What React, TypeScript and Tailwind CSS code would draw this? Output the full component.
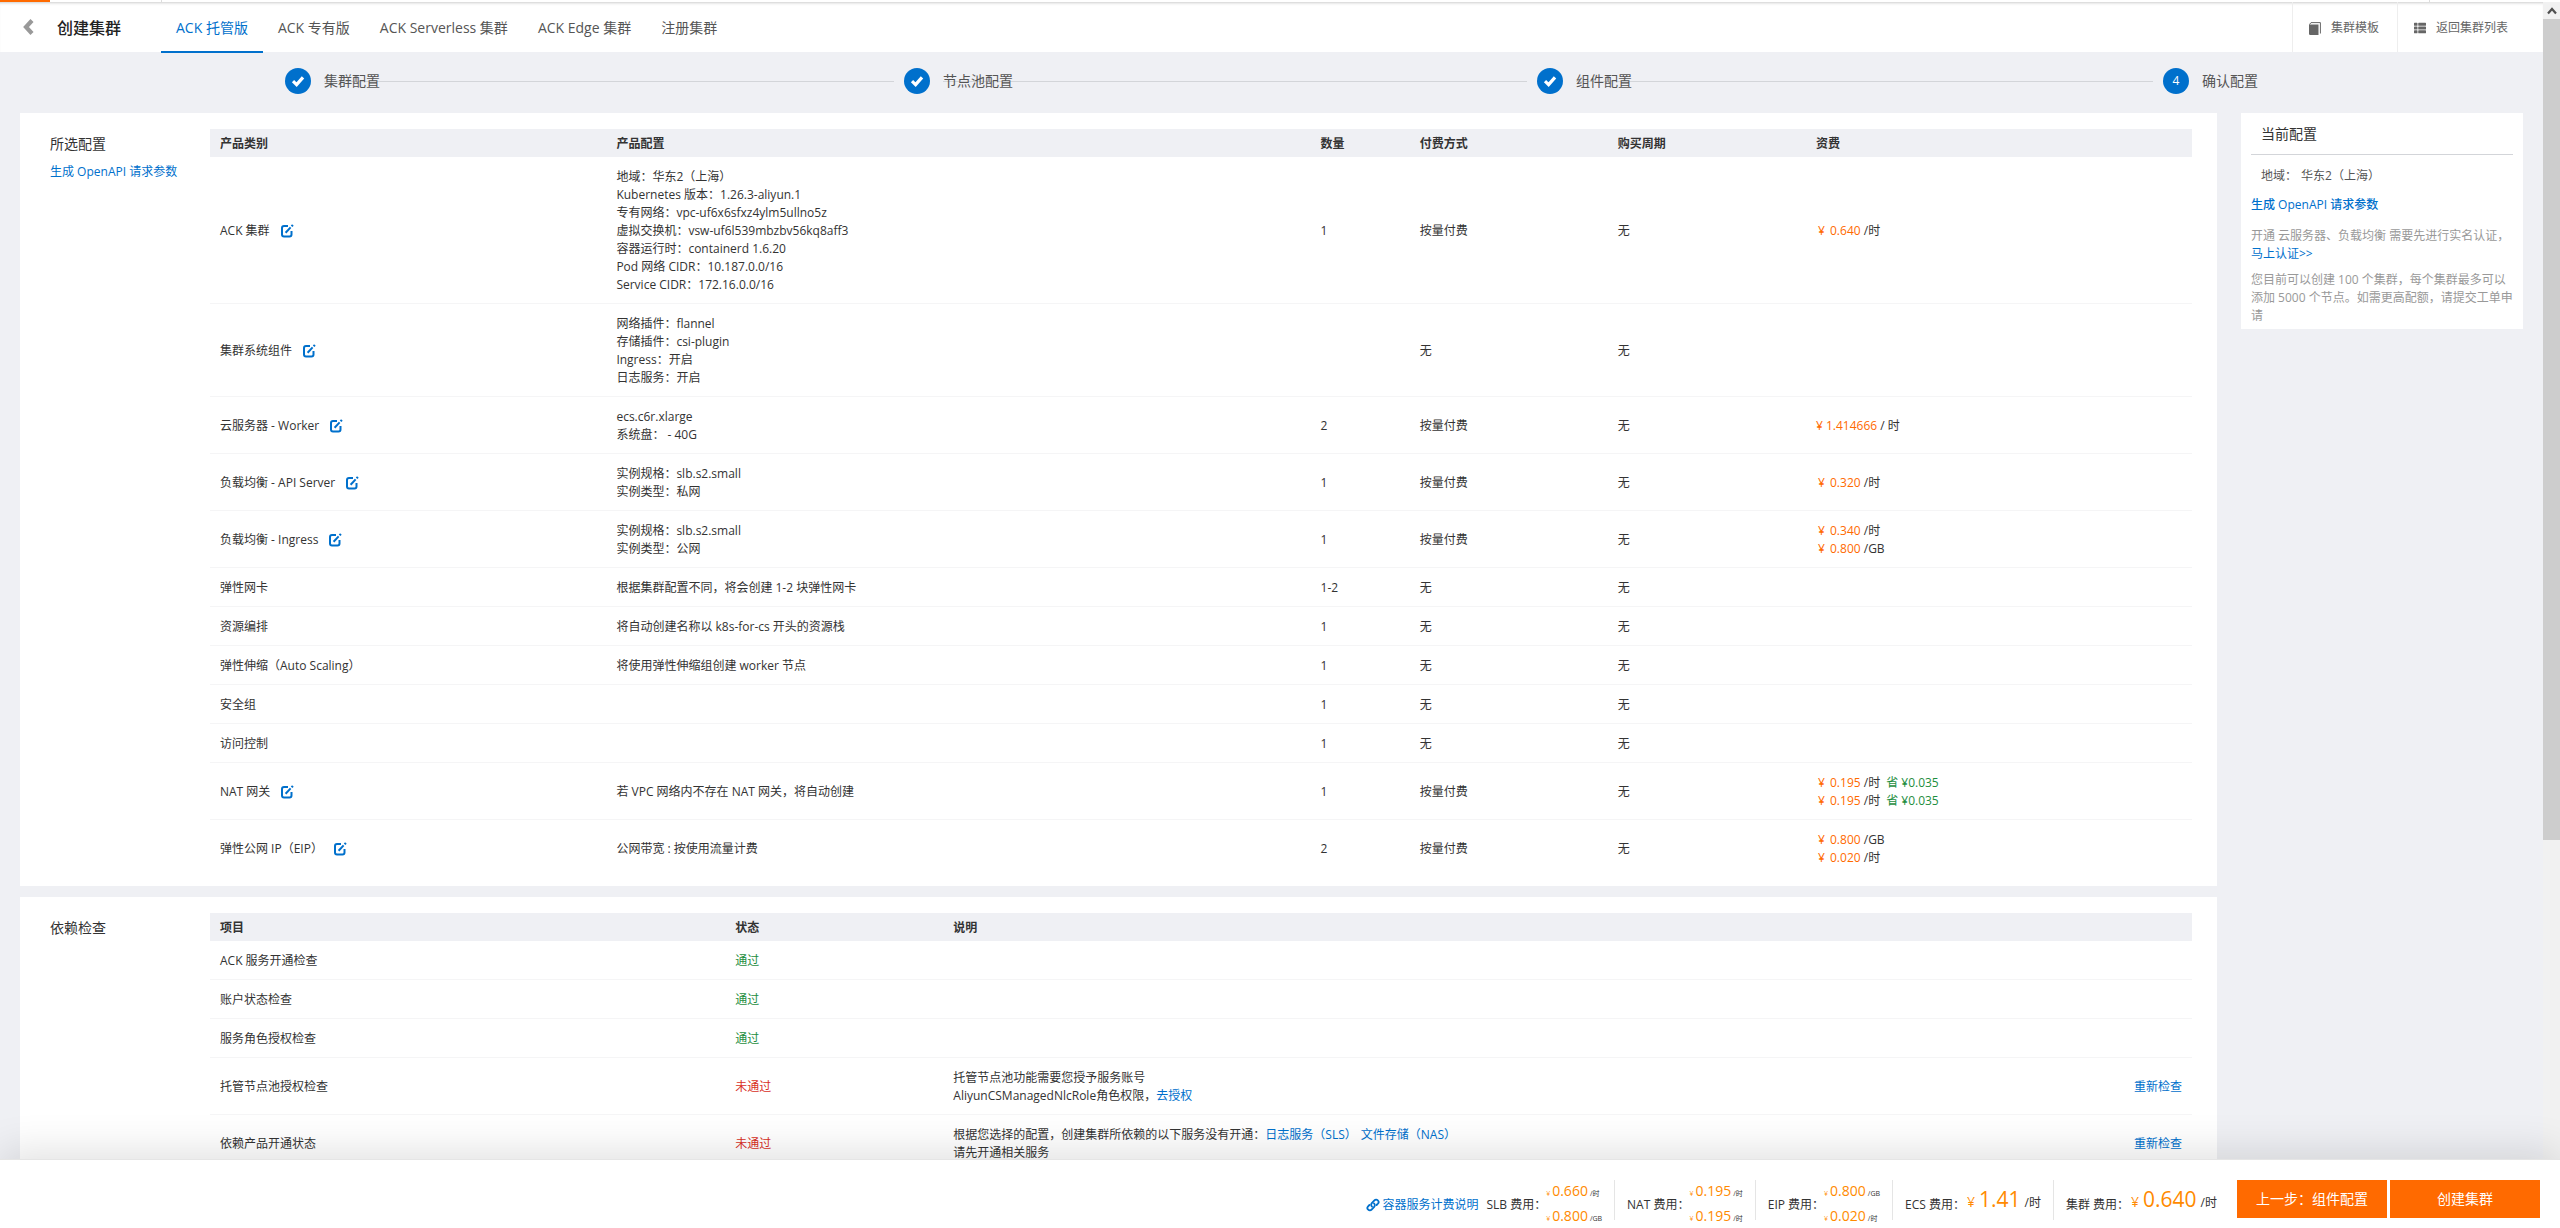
import React from 'react';
import { FaThList } from 'react-icons/fa';

const tabs = ['ACK 托管版', 'ACK 专有版', 'ACK Serverless 集群', 'ACK Edge 集群', '注册集群'];

interface Price {
  value: string;
  unit: string;
  saved?: string;
}

interface ProductRow {
  name: string;
  editable?: boolean;
  config: string[];
  count: string;
  payment: string;
  period: string;
  prices?: Price[];
}

const products: ProductRow[] = [
  {
    name: 'ACK 集群',
    editable: true,
    config: [
      '地域：华东2（上海）',
      'Kubernetes 版本：1.26.3-aliyun.1',
      '专有网络：vpc-uf6x6sfxz4ylm5ullno5z',
      '虚拟交换机：vsw-uf6l539mbzbv56kq8aff3',
      '容器运行时：containerd 1.6.20',
      'Pod 网络 CIDR：10.187.0.0/16',
      'Service CIDR：172.16.0.0/16',
    ],
    count: '1',
    payment: '按量付费',
    period: '无',
    prices: [{ value: '0.640', unit: '/时' }],
  },
  {
    name: '集群系统组件',
    editable: true,
    config: ['网络插件：flannel', '存储插件：csi-plugin', 'Ingress：开启', '日志服务：开启'],
    count: '',
    payment: '无',
    period: '无',
  },
  {
    name: '云服务器 - Worker',
    editable: true,
    config: ['ecs.c6r.xlarge', '系统盘： - 40G'],
    count: '2',
    payment: '按量付费',
    period: '无',
    prices: [{ value: '1.414666', unit: '/ 时' }],
  },
  {
    name: '负载均衡 - API Server',
    editable: true,
    config: ['实例规格：slb.s2.small', '实例类型：私网'],
    count: '1',
    payment: '按量付费',
    period: '无',
    prices: [{ value: '0.320', unit: '/时' }],
  },
  {
    name: '负载均衡 - Ingress',
    editable: true,
    config: ['实例规格：slb.s2.small', '实例类型：公网'],
    count: '1',
    payment: '按量付费',
    period: '无',
    prices: [{ value: '0.340', unit: '/时' }, { value: '0.800', unit: '/GB' }],
  },
  { name: '弹性网卡', config: ['根据集群配置不同，将会创建 1-2 块弹性网卡'], count: '1-2', payment: '无', period: '无' },
  { name: '资源编排', config: ['将自动创建名称以 k8s-for-cs 开头的资源栈'], count: '1', payment: '无', period: '无' },
  { name: '弹性伸缩（Auto Scaling）', config: ['将使用弹性伸缩组创建 worker 节点'], count: '1', payment: '无', period: '无' },
  { name: '安全组', config: [], count: '1', payment: '无', period: '无' },
  { name: '访问控制', config: [], count: '1', payment: '无', period: '无' },
  {
    name: 'NAT 网关',
    editable: true,
    config: ['若 VPC 网络内不存在 NAT 网关，将自动创建'],
    count: '1',
    payment: '按量付费',
    period: '无',
    prices: [{ value: '0.195', unit: '/时', saved: '0.035' }, { value: '0.195', unit: '/时', saved: '0.035' }],
  },
  {
    name: '弹性公网 IP（EIP）',
    editable: true,
    config: ['公网带宽 : 按使用流量计费'],
    count: '2',
    payment: '按量付费',
    period: '无',
    prices: [{ value: '0.800', unit: '/GB' }, { value: '0.020', unit: '/时' }],
  },
];

interface CheckRow {
  name: string;
  passed: boolean;
  description?: React.ReactNode;
}

const checks: CheckRow[] = [
  { name: 'ACK 服务开通检查', passed: true },
  { name: '账户状态检查', passed: true },
  { name: '服务角色授权检查', passed: true },
  {
    name: '托管节点池授权检查',
    passed: false,
    description: (
      <>
        托管节点池功能需要您授予服务账号
        <br />
        AliyunCSManagedNlcRole角色权限，<a href="#grant" className="text-[#0070cc]">去授权</a>
      </>
    ),
  },
  {
    name: '依赖产品开通状态',
    passed: false,
    description: (
      <>
        根据您选择的配置，创建集群所依赖的以下服务没有开通：
        <a href="#sls" className="mr-1 text-[#0070cc]">日志服务（SLS）</a>
        <a href="#nas" className="text-[#0070cc]">文件存储（NAS）</a>
        <br />
        请先开通相关服务
      </>
    ),
  },
];

const BackIcon = () => (
  <svg viewBox="0 0 12 16" className="h-4 w-3" fill="none" stroke="currentColor" strokeWidth="4.2">
    <path d="M10 1.500 4 8l6 6.500" />
  </svg>
);

const TemplateIcon = () => (
  <svg viewBox="0 0 12 13" className="h-[13px] w-3" fill="currentColor">
    <path d="M0 2.500h9.500V13H1.200A1.200 1.200 0 0 1 0 11.800z" />
    <path d="M.5 2.500 2 .6h9.400V11.500" fill="none" stroke="currentColor" />
  </svg>
);

const EditIcon = () => (
  <svg viewBox="0 0 14 14" className="h-3.5 w-3.5" fill="none" stroke="currentColor" strokeWidth="2">
    <path d="M8 2H4a2 2 0 0 0-2 2v6.500a2 2 0 0 0 2 2h5.500a2 2 0 0 0 2-2V7" />
    <path d="M5.600 8.800 10.600 3.400" />
    <path d="M11.600 2.300 12.900 1" strokeWidth="2.200" />
  </svg>
);

const LinkIcon = () => (
  <svg viewBox="0 0 14 14" className="h-3.5 w-3.5" fill="none" stroke="currentColor" strokeWidth="1.800" strokeLinecap="round">
    <path d="M6 8.600a2.400 2.400 0 0 1-.2-3.400l2.600-2.800a2.400 2.400 0 0 1 3.500 3.300L10.600 7" />
    <path d="M8 5.400a2.400 2.400 0 0 1 .2 3.400l-2.600 2.800a2.400 2.400 0 0 1-3.500-3.300L3.400 7" />
  </svg>
);

const CheckMark = () => (
  <svg viewBox="0 0 14 14" className="h-3.5 w-3.5" fill="none" stroke="currentColor" strokeWidth="3.200">
    <path d="M2 7.200 5.600 10.600 12 3.400" />
  </svg>
);

const Step = ({ label, number }: { label: string; number?: number }) => (
  <div className="flex items-center">
    <span className="mr-[13px] flex h-[26px] w-[26px] items-center justify-center rounded-full bg-[#0070cc] text-xs text-white">
      {number ?? <CheckMark />}
    </span>
    <div className="relative mr-2.5 flex-1 text-sm text-[#555]">
      {/* The connector runs behind the label */}
      {!number && <div className="absolute inset-x-0 top-1/2 h-px bg-[#d3d5d9]" />}
      <span className="relative">{label}</span>
    </div>
  </div>
);

const PriceLine = ({ price }: { price: Price }) => {
  if (price.unit === '/ 时') {
    return (
      <div>
        <span className="text-[#ff6a00]">¥ {price.value}</span> {price.unit}
      </div>
    );
  }
  return (
    <div className="pl-0.5">
      <span className="text-[#ff6a00]"><span className="mr-0.5">¥</span> {price.value}</span> {price.unit}
      {price.saved && <span className="ml-1.5 text-[#1e8e3e]">省 ¥{price.saved}</span>}
    </div>
  );
};

const SmallFee = ({ value, unit }: { value: string; unit: string }) => (
  <div className="flex h-[25px] items-baseline gap-0.5">
    <span className="text-[7px] leading-none text-[#ff8a00]">¥</span>
    <span className="text-sm leading-[25px] text-[#ff8a00]">{value}</span>
    <span className="text-[7px] leading-none">{unit}</span>
  </div>
);

const BigFee = ({ label, value }: { label: string; value: string }) => (
  <div className="flex">
    <span className="mt-4">{label}</span>
    <div className="mt-[5px] ml-0.5 flex items-baseline">
      <span className="text-sm text-[#ff8a00]">¥</span>
      <span className="mx-1 text-[21px] leading-7 text-[#ff8a00]">{value}</span>
      <span>/时</span>
    </div>
  </div>
);

const Divider = () => <div className="mx-3 h-10 w-px bg-[#e5e5e5]" />;

const App: React.FC = () => {
  return (
    <div className="flex h-screen flex-col overflow-hidden bg-[#eff0f4] font-['Open_Sans','Noto_Sans_CJK_SC',sans-serif] text-xs leading-[18px] text-[#333]">
      {/* Bottom edge of the console bar */}
      <div className="flex h-0.5 shrink-0 bg-white">
        <div className="w-[50px] bg-[#ff6a00]" />
        <div className="w-28 border-r border-[#ddd]" />
        <div className="ml-auto w-[131px] border-l border-[#ddd]" />
      </div>

      <div className="flex min-h-0 flex-1">
        <div className="min-w-0 flex-1 overflow-hidden">
          <header className="flex h-[50px] items-stretch bg-white shadow-[inset_0_3px_3px_-2px_#ccc]">
            <button type="button" aria-label="返回" className="ml-[22px] text-[#999]">
              <BackIcon />
            </button>
            <h1 className="ml-[23px] flex w-[104px] items-center pt-0.5 text-base font-medium text-[#222]">创建集群</h1>
            <nav className="-mb-px flex text-sm">
              {tabs.map((tab, i) => (
                <a
                  key={tab}
                  href="#tab"
                  className={
                    i === 0
                      ? 'flex items-center border-b-2 border-[#0070cc] px-[15px] pt-0.5 text-[#0070cc]'
                      : 'flex items-center border-b-2 border-transparent px-[15px] pt-0.5 text-[#555]'
                  }
                >
                  {tab}
                </a>
              ))}
            </nav>
            <div className="ml-auto flex text-[#666]">
              <a href="#template" className="flex items-center gap-2.5 border-l border-[#eee] pt-0.5 pr-[18px] pl-4">
                <TemplateIcon />
                集群模板
              </a>
              <a href="#list" className="flex items-center gap-2.5 border-l border-[#eee] pt-0.5 pr-[35px] pl-4">
                <FaThList className="h-3 w-3" />
                返回集群列表
              </a>
            </div>
          </header>

          <div className="grid h-[61px] grid-cols-[619fr_633fr_626fr_auto] items-center pr-[275px] pb-1 pl-[285px]">
            <Step label="集群配置" />
            <Step label="节点池配置" />
            <Step label="组件配置" />
            <Step label="确认配置" number={4} />
          </div>

          <div className="flex items-start gap-6 px-5">
            <main className="min-w-0 flex-1">
              <section className="mb-[11px] flex bg-white pt-4 pr-[25px] pb-2.5 pl-[30px]">
                <div className="w-40 shrink-0 pt-[5px]">
                  <h2 className="text-sm leading-5">所选配置</h2>
                  <a href="#openapi" className="mt-[9px] block text-[#0070cc]">生成 OpenAPI 请求参数</a>
                </div>
                <table className="w-full table-fixed text-left">
                  <colgroup>
                    <col className="w-[20%]" />
                    <col />
                    <col className="w-[5%]" />
                    <col className="w-[10%]" />
                    <col className="w-[10%]" />
                    <col className="w-[386px]" />
                  </colgroup>
                  <thead className="bg-[#eff0f4]">
                    <tr>
                      {['产品类别', '产品配置', '数量', '付费方式', '购买周期', '资费'].map((title) => (
                        <th key={title} className="px-2.5 pt-1.5 pb-1 font-bold">{title}</th>
                      ))}
                    </tr>
                  </thead>
                  <tbody>
                    {products.map((row) => (
                      <tr key={row.name} className="border-b border-[#f5f5f6] last:border-b-0">
                        <td className="px-2.5 pt-[11px] pb-[9px]">
                          <div className="flex items-center gap-2.5">
                            {row.name}
                            {row.editable && (
                              <button type="button" aria-label="编辑" className="text-[#0070cc]">
                                <EditIcon />
                              </button>
                            )}
                          </div>
                        </td>
                        <td className="px-2.5 pt-[11px] pb-[9px]">
                          {row.config.map((line) => (
                            <div key={line}>{line}</div>
                          ))}
                        </td>
                        <td className="px-2.5 pt-[11px] pb-[9px]">{row.count}</td>
                        <td className="px-2.5 pt-[11px] pb-[9px]">{row.payment}</td>
                        <td className="px-2.5 pt-[11px] pb-[9px]">{row.period}</td>
                        <td className="px-2.5 pt-[11px] pb-[9px]">
                          {row.prices?.map((price, i) => (
                            <PriceLine key={i} price={price} />
                          ))}
                        </td>
                      </tr>
                    ))}
                  </tbody>
                </table>
              </section>

              <section className="flex bg-white pt-4 pr-[25px] pb-2.5 pl-[30px]">
                <h2 className="w-40 shrink-0 pt-[5px] text-sm leading-5">依赖检查</h2>
                <table className="w-full table-fixed text-left">
                  <colgroup>
                    <col className="w-[26%]" />
                    <col className="w-[11%]" />
                    <col />
                    <col className="w-[10%]" />
                  </colgroup>
                  <thead className="bg-[#eff0f4]">
                    <tr>
                      {['项目', '状态', '说明', ''].map((title) => (
                        <th key={title} className="px-2.5 pt-1.5 pb-1 font-bold">{title}</th>
                      ))}
                    </tr>
                  </thead>
                  <tbody>
                    {checks.map((row) => (
                      <tr key={row.name} className="border-b border-[#f5f5f6]">
                        <td className="px-2.5 pt-[11px] pb-[9px]">{row.name}</td>
                        <td
                          className={
                            row.passed
                              ? 'px-2.5 pt-[11px] pb-[9px] text-[#1e8e3e]'
                              : 'px-2.5 pt-[11px] pb-[9px] text-[#d93026]'
                          }
                        >
                          {row.passed ? '通过' : '未通过'}
                        </td>
                        <td className="px-2.5 pt-[11px] pb-[9px]">{row.description}</td>
                        <td className="px-2.5 pt-[11px] pb-[9px] text-right">
                          {!row.passed && <button type="button" className="text-[#0070cc]">重新检查</button>}
                        </td>
                      </tr>
                    ))}
                  </tbody>
                </table>
              </section>
            </main>

            <aside className="w-[282px] shrink-0 bg-white px-2.5 pb-1">
              <h2 className="border-b border-[#d3d5d9] px-2.5 pt-[11px] pb-2.5 text-sm leading-5">当前配置</h2>
              <p className="mt-3 px-2.5 text-[#555]">地域：<span className="ml-1">华东2（上海）</span></p>
              <a href="#openapi" className="mt-[11px] block font-medium text-[#0070cc]">生成 OpenAPI 请求参数</a>
              <p className="mt-[13px] text-[#999]">
                开通 云服务器、负载均衡 需要先进行实名认证，
                <a href="#verify" className="text-[#0070cc]">马上认证&gt;&gt;</a>
              </p>
              <p className="mt-2 text-[#999]">
                您目前可以创建 100 个集群，每个集群最多可以添加 5000 个节点。如需更高配额，请提交工单申请
              </p>
            </aside>
          </div>
        </div>

        {/* Scrollbar */}
        <div className="flex w-[17px] shrink-0 flex-col bg-[#f1f1f1]">
          <div className="flex h-[17px] items-center justify-center text-[#505050]">
            <svg viewBox="0 0 10 8" className="h-2 w-2.5" fill="none" stroke="currentColor" strokeWidth="2.200">
              <path d="M1 6.500 5 2l4 4.500" />
            </svg>
          </div>
          <div className="h-[71%] bg-[#cdcdcd]" />
        </div>
      </div>

      <footer className="relative flex h-[69px] shrink-0 items-start justify-end border-t border-[#e5e5e5] bg-white pt-5 pr-5 shadow-[0_-8px_40px_rgba(0,0,0,0.12)]">
        <a href="#billing" className="mt-4 flex items-center gap-0.5 text-[#0070cc]">
          <LinkIcon />
          容器服务计费说明
        </a>
        <span className="mt-4 ml-2">SLB 费用：</span>
        <div className="-mt-0.5">
          <SmallFee value="0.660" unit="/时" />
          <SmallFee value="0.800" unit="/GB" />
        </div>
        <Divider />
        <span className="mt-4">NAT 费用：</span>
        <div className="-mt-0.5">
          <SmallFee value="0.195" unit="/时" />
          <SmallFee value="0.195" unit="/时" />
        </div>
        <Divider />
        <span className="mt-4">EIP 费用：</span>
        <div className="-mt-0.5">
          <SmallFee value="0.800" unit="/GB" />
          <SmallFee value="0.020" unit="/时" />
        </div>
        <Divider />
        <BigFee label="ECS 费用：" value="1.41" />
        <Divider />
        <BigFee label="集群 费用：" value="0.640" />
        <button type="button" className="ml-5 h-[38px] w-[150px] bg-[#ff6a00] text-sm text-white">上一步：组件配置</button>
        <button type="button" className="ml-[3px] h-[38px] w-[150px] bg-[#ff6a00] text-sm text-white">创建集群</button>
      </footer>
    </div>
  );
};

export default App;
